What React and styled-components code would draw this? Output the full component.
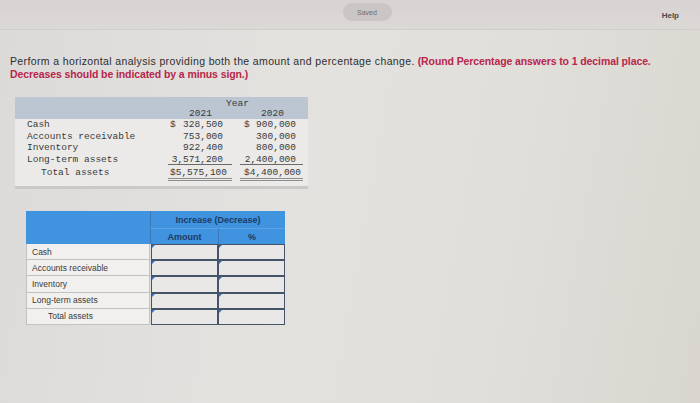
import styled, { createGlobalStyle } from 'styled-components';

const GlobalStyle = createGlobalStyle`
    html, body {
        margin: 0;
        padding: 0;
    }
    body {
        width: 700px;
        height: 403px;
        overflow: hidden;
        font-family: "Liberation Sans", Arial, sans-serif;
        background: linear-gradient(100deg, #dcdad8 0%, #e4e2df 40%, #e1dfda 70%, #d8d6cf 100%);
    }
`;

const Page = styled.div`
    width: 700px;
    height: 403px;
    display: flex;
    flex-direction: column;
`;

const TopBar = styled.div`
    height: 30px;
    display: flex;
    align-items: flex-start;
    justify-content: center;
    position: relative;
    background: linear-gradient(180deg, #d6d3d2 0%, #dbd8d6 100%);
    border-bottom: 1px solid #d0cdca;
    box-sizing: border-box;
`;

const SavedPill = styled.div`
    margin: 3px 0 0 34px;
    width: 49px;
    height: 18px;
    border-radius: 9px;
    background: #cbc6c6;
    color: #6e6a6b;
    font-size: 7px;
    display: flex;
    align-items: center;
    justify-content: center;
`;

const Help = styled.div`
    position: absolute;
    right: 21px;
    top: 11px;
    font-size: 8px;
    font-weight: bold;
    color: #4a4848;
`;

const Instructions = styled.p`
    margin: 25px 0 0 10px;
    font-size: 10.5px;
    line-height: 13px;
    color: #2e2d2d;
    white-space: nowrap;
`;

const Plain = styled.span`
    letter-spacing: 0.37px;
`;

const Note = styled.span`
    color: #b8264c;
    font-weight: bold;
    letter-spacing: -0.1px;
`;

/* ---------- Year table ---------- */

const YearTable = styled.div`
    margin: 16px 0 0 15px;
    width: 293px;
    font-family: "Liberation Mono", "Courier New", monospace;
    font-size: 9.5px;
    color: #3a3a3a;
    display: grid;
    grid-template-columns: 152px 70px 71px;
    background: #ebeae8;
`;

const YearHead = styled.div`
    grid-column: 1 / 4;
    height: 22px;
    background: #bcc6d3;
    display: grid;
    grid-template-columns: 152px 70px 71px;
    grid-template-rows: 11px 11px;
`;

const YearTitle = styled.div`
    grid-column: 2 / 4;
    text-align: center;
    line-height: 11px;
    padding-top: 1px;
`;

const YearCol = styled.div`
    grid-column: ${({col}) => col};
    text-align: center;
    line-height: 11px;
    padding: ${({col}) => col === 2 ? '0 3px 0 0' : '0'};
`;

const Label = styled.div`
    height: ${({total}) => total ? '16px' : '11.5px'};
    line-height: ${({total}) => total ? '15px' : '11.5px'};
    padding-left: ${({total}) => total ? '26px' : '12px'};
    white-space: nowrap;
`;

const Value = styled.div`
    height: ${({total}) => total ? '16px' : '11.5px'};
    line-height: ${({total}) => total ? '15px' : '11.5px'};
    margin: ${({col}) => col === 1 ? '0 5px 0 1px' : '0 5px 0 3px'};
    padding: ${({col}) => col === 1 ? '0 9px 0 2px' : '0 7px 0 4px'};
    display: flex;
    justify-content: space-between;
    box-sizing: border-box;
    border-bottom: ${({under}) => under ? '1px solid #6a6a6a' : 'none'};
    ${({total}) => total && `
        border-bottom: 3px double #8d8d8d;
    `}
`;

const BottomBar = styled.div`
    grid-column: 1 / 4;
    height: 3px;
    margin-top: 5px;
    background: #c9c9c9;
`;

/* ---------- Analysis table ---------- */

const AnalysisTable = styled.div`
    margin: 22px 0 0 26px;
    width: 259px;
    display: grid;
    grid-template-columns: 124px 68px 67px;
    font-size: 8.5px;
`;

const BlueHead = styled.div`
    grid-column: ${({span}) => span};
    height: ${({h}) => h}px;
    background: #3f93df;
    color: #1d3b66;
    font-weight: bold;
    font-size: 9px;
    display: flex;
    align-items: center;
    justify-content: center;
    box-sizing: border-box;
    border-left: ${({divider}) => divider ? '1px solid #3a78b8' : 'none'};
    border-top: ${({topLine}) => topLine ? '1px solid #5aa2e4' : 'none'};
`;

const RowLabel = styled.div`
    height: 16.2px;
    box-sizing: border-box;
    background: #f1f0ee;
    border: 1px solid #c2c2c2;
    border-top: none;
    color: #3a3a3a;
    padding-left: ${({total}) => total ? '21px' : '5px'};
    display: flex;
    align-items: center;
`;

const InputCell = styled.div`
    height: 16.2px;
    box-sizing: border-box;
    background: #e9e8e6;
    border: 1.5px solid #46546a;
    margin-left: ${({first}) => first ? '1px' : '0'};
    position: relative;

    &::before {
        content: '';
        position: absolute;
        left: 0;
        top: 0;
        border-top: 3px solid #2b72c4;
        border-right: 3px solid transparent;
    }
`;

const rows = [
    { name: 'Cash', y21: '328,500', y20: '900,000', dollar: true },
    { name: 'Accounts receivable', y21: '753,000', y20: '300,000' },
    { name: 'Inventory', y21: '922,400', y20: '800,000' },
    { name: 'Long-term assets', y21: '3,571,200', y20: '2,400,000', under: true },
];

const labels = ['Cash', 'Accounts receivable', 'Inventory', 'Long-term assets', 'Total assets'];

const App = () => {
    return (
        <Page>
            <GlobalStyle />
            <TopBar>
                <SavedPill>Saved</SavedPill>
                <Help>Help</Help>
            </TopBar>

            <Instructions>
                <Plain>Perform a horizontal analysis providing both the amount and percentage change.</Plain>{' '}
                <Note>(Round Percentage answers to 1 decimal place.<br />Decreases should be indicated by a minus sign.)</Note>
            </Instructions>

            <YearTable>
                <YearHead>
                    <YearTitle>Year</YearTitle>
                    <YearCol col={2}>2021</YearCol>
                    <YearCol col={3}>2020</YearCol>
                </YearHead>
                {
                    rows.map((row) => (
                        <>
                            <Label key={row.name}>{row.name}</Label>
                            <Value col={1} under={row.under}>
                                <span>{row.dollar ? '$' : ''}</span>
                                <span>{row.y21}</span>
                            </Value>
                            <Value col={2} under={row.under}>
                                <span>{row.dollar ? '$' : ''}</span>
                                <span>{row.y20}</span>
                            </Value>
                        </>
                    ))
                }
                <Label total>Total assets</Label>
                <Value col={1} total>
                    <span>$5,575,100</span>
                </Value>
                <Value col={2} total>
                    <span>$4,400,000</span>
                </Value>
                <BottomBar />
            </YearTable>

            <AnalysisTable>
                <BlueHead span="1" h={17} />
                <BlueHead span="2 / 4" h={17} divider>Increase (Decrease)</BlueHead>
                <BlueHead span="1" h={16} />
                <BlueHead span="2" h={16} divider topLine>Amount</BlueHead>
                <BlueHead span="3" h={16} divider topLine>%</BlueHead>
                {
                    labels.map((name, idx) => (
                        <>
                            <RowLabel key={idx} total={name === 'Total assets'}>{name}</RowLabel>
                            <InputCell first />
                            <InputCell />
                        </>
                    ))
                }
            </AnalysisTable>
        </Page>
    );
};

export default App;
